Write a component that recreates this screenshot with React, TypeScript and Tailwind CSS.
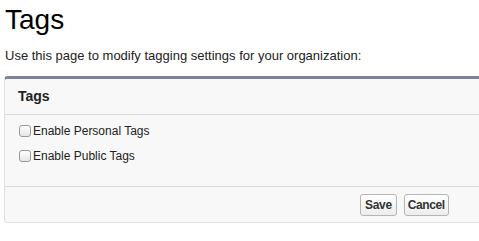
import { useState } from 'react';

const Check = ({ label }: { label: string }) => {
  const [on, setOn] = useState(false);
  return (
    <label className="flex items-center h-[25px] cursor-pointer">
      <input
        type="checkbox"
        checked={on}
        onChange={() => setOn(!on)}
        className="appearance-none w-[12px] h-[12px] m-0 mr-[2px] rounded-[3px] border border-[#9a9a9a] bg-gradient-to-b from-white to-[#e6e6e6] checked:bg-[#4a90e2]"
      />
      <span className="text-[12px] text-[#222]">{label}</span>
    </label>
  );
};

export default function App() {
  return (
    <div className="w-[479px] h-[241px] overflow-hidden bg-white font-['Liberation_Sans',Arial,sans-serif]">
      <h1 className="pl-[5px] pt-[4px] text-[28px] leading-[32px] text-black">Tags</h1>
      <p className="pl-[5px] mt-[12px] text-[13px] leading-[16px] text-[#222]">
        Use this page to modify tagging settings for your organization:
      </p>
      <div className="ml-[4px] mt-[12px] w-[500px] h-[147px] bg-[#f8f8f8] border border-[#e0e0e0] border-t-[3px] border-t-[#7a849b] rounded-[4px] flex flex-col">
        <div className="h-[36px] border-b border-[#dadada] flex items-center pl-[13px]">
          <h2 className="text-[14px] font-bold text-[#222]">Tags</h2>
        </div>
        <div className="pl-[14px] pt-[3px] h-[71px]">
          <Check label="Enable Personal Tags" />
          <Check label="Enable Public Tags" />
        </div>
        <div className="border-t border-[#dadada] flex-1 flex items-center pl-[355px] gap-[7px]">
          <button className="h-[22px] px-[4px] text-[12px] tracking-[-0.3px] font-bold text-[#333] border border-[#b5b5b5] rounded-[3px] bg-gradient-to-b from-white to-[#ededed]">
            Save
          </button>
          <button className="h-[22px] px-[3px] text-[12px] tracking-[-0.4px] font-bold text-[#333] border border-[#b5b5b5] rounded-[3px] bg-gradient-to-b from-white to-[#ededed]">
            Cancel
          </button>
        </div>
      </div>
    </div>
  );
}
